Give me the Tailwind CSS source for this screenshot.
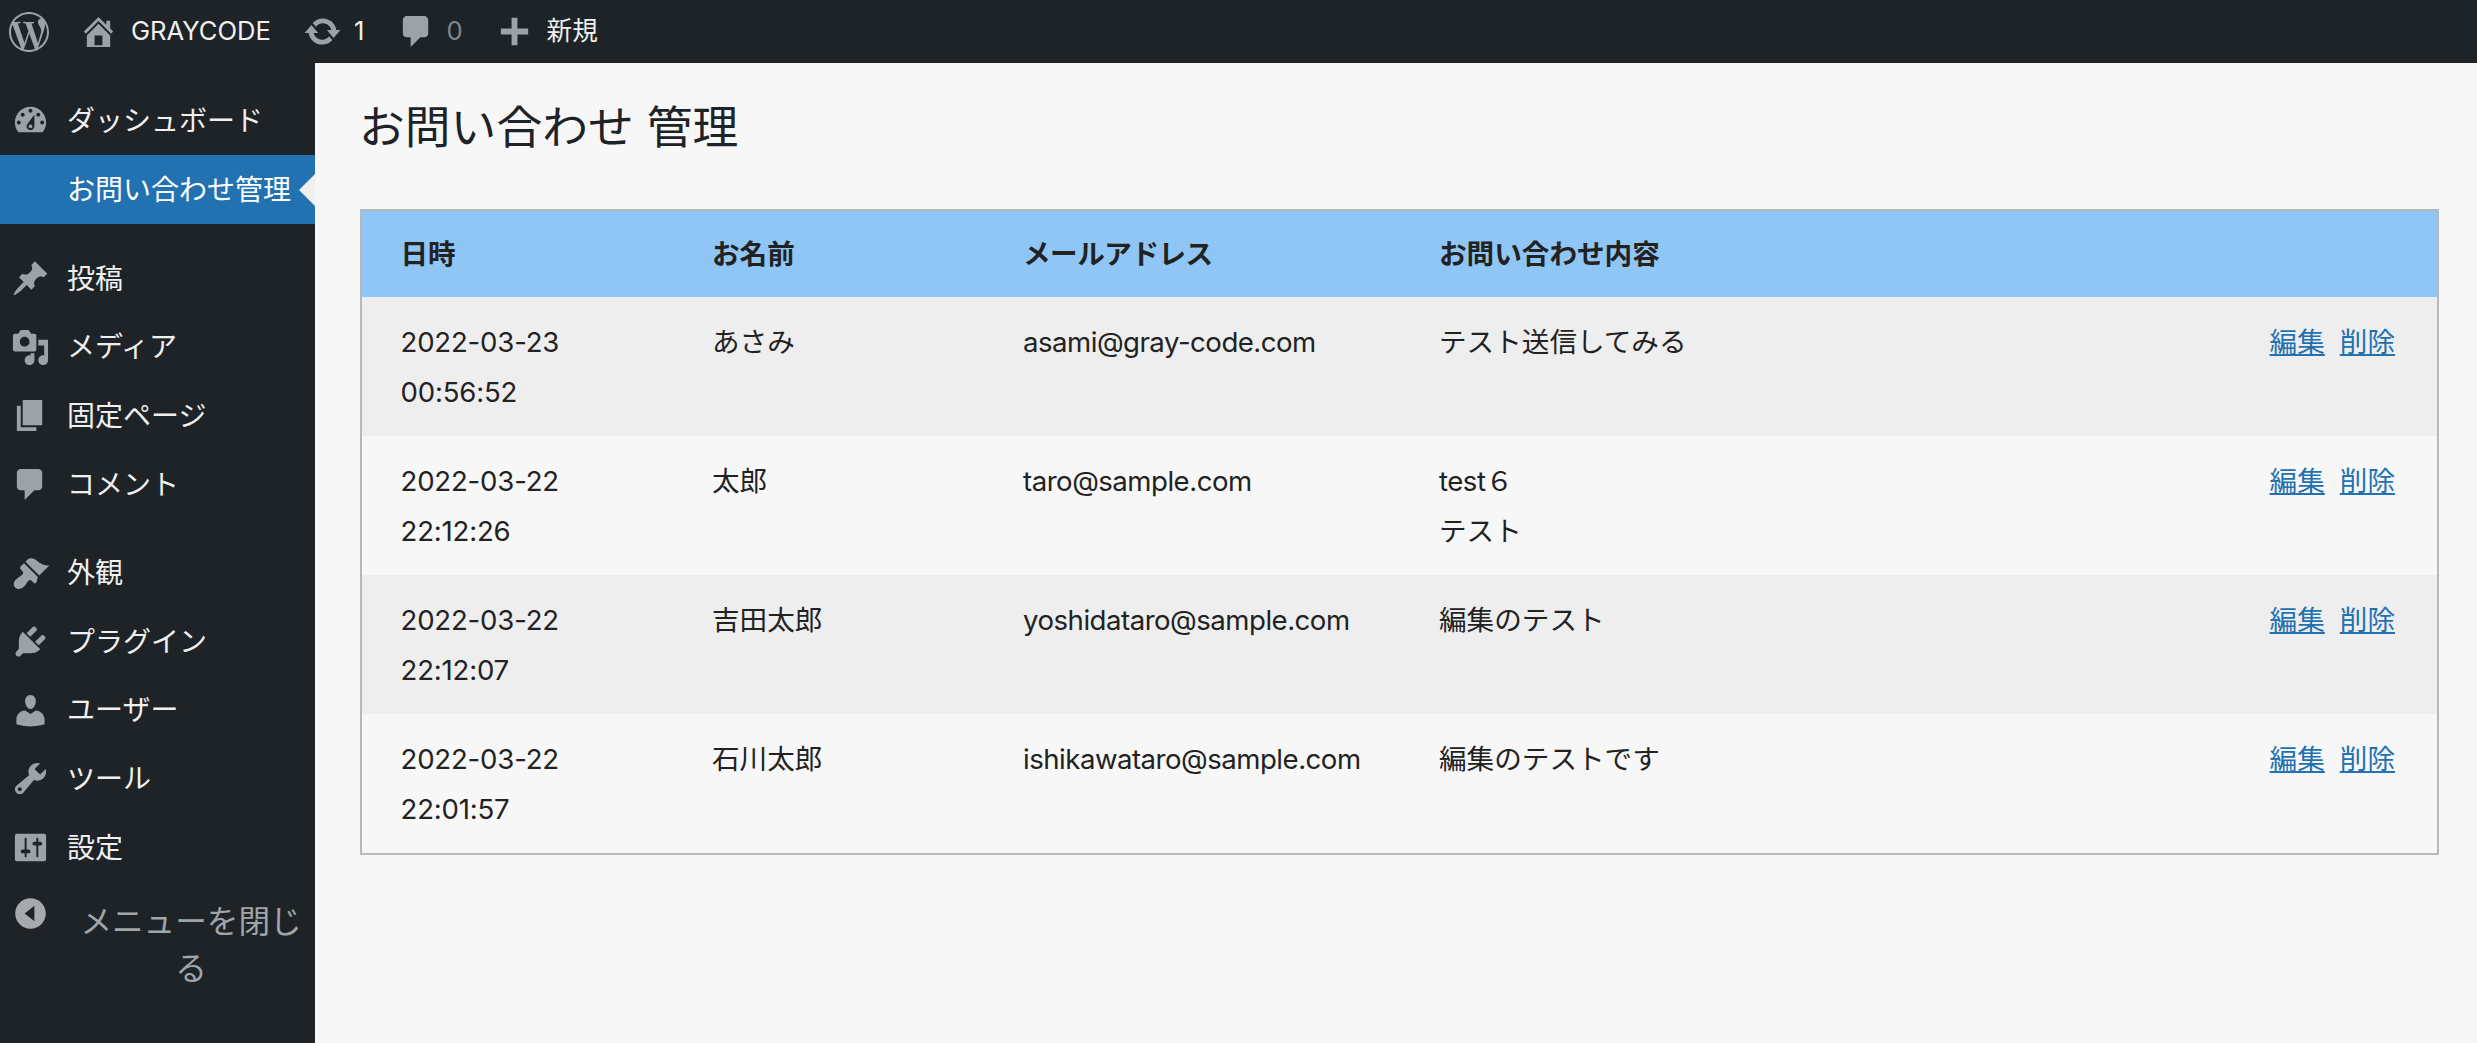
<!DOCTYPE html>
<html lang="ja">

<head>
  <meta charset="UTF-8">
  <title>お問い合わせ 管理</title>
  <script src="https://cdn.jsdelivr.net/npm/@tailwindcss/browser@4"></script>
</head>

<body class="bg-[#f7f7f7] text-[#1d2327] font-['Inter','Noto_Sans_CJK_JP',sans-serif] overflow-hidden">
  <div class="w-[2477px] h-[1043px] flex flex-col">

    <!-- admin bar -->
    <header class="h-[63px] shrink-0 bg-[#1d2327] text-[#f0f0f1] text-[25.6px] flex items-center">
      <svg class="w-[40px] h-[40px] ml-[9px] fill-[#9ca2a7]" viewBox="0 0 24 24"><path d="M21.469 6.825c.84 1.537 1.318 3.3 1.318 5.175 0 3.979-2.156 7.456-5.363 9.325l3.295-9.527c.615-1.54.82-2.771.82-3.864 0-.405-.026-.78-.07-1.11m-7.981.105c.647-.03 1.232-.105 1.232-.105.582-.075.514-.93-.067-.899 0 0-1.755.135-2.88.135-1.064 0-2.85-.15-2.85-.15-.585-.03-.661.855-.075.885 0 0 .54.061 1.125.09l1.68 4.605-2.37 7.08L5.354 6.9c.649-.03 1.234-.1 1.234-.1.585-.075.516-.93-.065-.896 0 0-1.746.138-2.874.138-.2 0-.438-.008-.69-.015C4.911 3.15 8.235 1.215 12 1.215c2.809 0 5.365 1.072 7.286 2.833-.046-.003-.091-.009-.141-.009-1.06 0-1.812.923-1.812 1.914 0 .89.513 1.643 1.06 2.531.411.72.89 1.643.89 2.977 0 .915-.354 1.994-.821 3.479l-1.075 3.585-3.9-11.61.001.014zM12 22.784c-1.059 0-2.081-.153-3.048-.437l3.237-9.406 3.315 9.087c.024.053.05.101.078.149-1.12.393-2.325.609-3.582.609M1.211 12c0-1.564.336-3.05.935-4.39L7.29 21.709C3.694 19.96 1.212 16.271 1.211 12M12 0C5.385 0 0 5.385 0 12s5.385 12 12 12 12-5.385 12-12S18.615 0 12 0"/></svg>
      <svg class="w-[39px] h-[39px] ml-[30px] fill-[#9ca2a7]" viewBox="0 0 20 20"><path d="M16 8.5l1.53 1.53-1.06 1.06L10 4.62l-6.47 6.47-1.06-1.06L10 2.5l4 4v-2h2v4zm-6-2.46l6 5.99V18H4v-5.97zM12 17v-5H8v5h4z"/></svg>
      <span class="ml-[13px]">GRAYCODE</span>
      <svg class="w-[39px] h-[39px] ml-[32px] fill-[#9ca2a7]" viewBox="0 0 20 20"><path d="M10.2 3.28c3.53 0 6.43 2.61 6.92 6h2.08l-3.5 4-3.5-4h2.32c-.45-1.97-2.21-3.45-4.32-3.45-1.45 0-2.73.71-3.54 1.78L4.95 5.66C6.23 4.2 8.11 3.28 10.2 3.28zm-.4 13.44c-3.52 0-6.43-2.61-6.92-6H.8l3.5-4c1.17 1.33 2.33 2.67 3.5 4H5.48c.45 1.97 2.21 3.45 4.32 3.45 1.45 0 2.73-.71 3.54-1.78l1.71 1.95c-1.28 1.46-3.15 2.38-5.25 2.38z"/></svg>
      <span class="ml-[12px]">1</span>
      <svg class="w-[39px] h-[39px] ml-[33px] fill-[#9ca2a7]" viewBox="0 0 20 20"><path d="M5 2h9c1.1 0 2 .9 2 2v7c0 1.1-.9 2-2 2h-2l-5 5v-5H5c-1.1 0-2-.9-2-2V4c0-1.1.9-2 2-2z"/></svg>
      <span class="ml-[10px] text-[#7f868c]">0</span>
      <svg class="w-[39px] h-[39px] ml-[32px] fill-[#9ca2a7]" viewBox="0 0 20 20"><path d="M8.5 3h3v5.5H17v3h-5.5V17h-3v-5.5H3v-3h5.5z"/></svg>
      <span class="ml-[13px]">新規</span>
    </header>

    <div class="flex-1 flex min-h-0">
      <!-- sidebar -->
      <nav class="w-[315px] shrink-0 bg-[#1d2327] text-[#f0f0f1] text-[28px] pt-[23px]">
        <a class="h-[69px] flex items-center pl-[11px]">
          <svg class="w-[39px] h-[39px] fill-[#9ca2a7]" viewBox="0 0 20 20"><path d="M3.76 16h12.48c1.1-1.37 1.76-3.11 1.76-5 0-4.42-3.58-8-8-8s-8 3.58-8 8c0 1.89.66 3.63 1.76 5zM10 4c.55 0 1 .45 1 1s-.45 1-1 1-1-.45-1-1 .45-1 1-1zM6 6c.55 0 1 .45 1 1s-.45 1-1 1-1-.45-1-1 .45-1 1-1zm8 0c.55 0 1 .45 1 1s-.45 1-1 1-1-.45-1-1 .45-1 1-1zm-5.37 5.55L12 7v6c0 1.1-.9 2-2 2s-2-.9-2-2c0-.57.24-1.08.63-1.45zM4 10c.55 0 1 .45 1 1s-.45 1-1 1-1-.45-1-1 .45-1 1-1zm12 0c.55 0 1 .45 1 1s-.45 1-1 1-1-.45-1-1 .45-1 1-1zm-5 3c0-.55-.45-1-1-1s-1 .45-1 1 .45 1 1 1 1-.45 1-1z"/></svg>
          <span class="ml-[17px]">ダッシュボード</span>
        </a>
        <a class="relative h-[69px] flex items-center pl-[67px] bg-[#2271b1] text-white">
          お問い合わせ管理
          <span class="absolute right-0 top-[19px] w-0 h-0 border-y-[16px] border-y-transparent border-r-[16px] border-r-[#f0f0f1]"></span>
        </a>

        <div class="mt-[20.5px]">
          <a class="h-[68.6px] flex items-center pl-[11px]">
            <svg class="w-[39px] h-[39px] fill-[#9ca2a7]" viewBox="0 0 20 20"><path d="M10.44 3.02l1.82-1.82 6.36 6.35-1.83 1.82c-1.05-.68-2.48-.57-3.41.36l-.75.75c-.92.93-1.04 2.35-.35 3.41l-1.83 1.82-2.41-2.41-2.8 2.79c-.42.42-3.38 2.71-3.8 2.29s1.86-3.39 2.28-3.81l2.79-2.79L4.1 9.36l1.83-1.82c1.05.69 2.48.57 3.4-.36l.75-.75c.93-.92 1.05-2.35.36-3.41z"/></svg>
            <span class="ml-[17px]">投稿</span>
          </a>
          <a class="h-[68.6px] flex items-center pl-[11px]">
            <svg class="w-[39px] h-[39px] fill-[#9ca2a7]" viewBox="0 0 20 20"><path d="M13 11V4c0-.55-.45-1-1-1h-1.67L9 1H5L3.67 3H2c-.55 0-1 .45-1 1v7c0 .55.45 1 1 1h10c.55 0 1-.45 1-1zM7 4.5c1.38 0 2.5 1.12 2.5 2.5S8.38 9.5 7 9.5 4.5 8.38 4.5 7 5.62 4.5 7 4.5zM14 6h5v10.5c0 1.38-1.12 2.5-2.5 2.5S14 17.88 14 16.5s1.12-2.5 2.5-2.5c.17 0 .34.02.5.05V9h-3V6zm-4 8.05V13h2v3.5c0 1.38-1.12 2.5-2.5 2.5S7 17.88 7 16.5 8.12 14 9.5 14c.17 0 .34.02.5.05z"/></svg>
            <span class="ml-[17px]">メディア</span>
          </a>
          <a class="h-[68.6px] flex items-center pl-[11px]">
            <svg class="w-[39px] h-[39px] fill-[#9ca2a7]" viewBox="0 0 20 20"><path d="M6 15V2h10v13H6zm-1 1h8v2H3V5h2v11z"/></svg>
            <span class="ml-[17px]">固定ページ</span>
          </a>
          <a class="h-[68.6px] flex items-center pl-[11px]">
            <svg class="w-[39px] h-[39px] fill-[#9ca2a7]" viewBox="0 0 20 20"><path d="M5 2h9c1.1 0 2 .9 2 2v7c0 1.1-.9 2-2 2h-2l-5 5v-5H5c-1.1 0-2-.9-2-2V4c0-1.1.9-2 2-2z"/></svg>
            <span class="ml-[17px]">コメント</span>
          </a>
        </div>

        <div class="mt-[20px]">
          <a class="h-[68.6px] flex items-center pl-[11px]">
            <svg class="w-[39px] h-[39px] fill-[#9ca2a7]" viewBox="0 0 20 20"><path d="M14.48 11.06L7.41 3.99l1.5-1.5c.5-.56 2.3-.47 3.51.32 1.21.8 1.43 1.28 2.91 2.1 1.18.64 2.45 1.26 4.45.85zm-.71.71L6.7 4.7 4.93 6.47c-.39.39-.39 1.02 0 1.41l1.06 1.06c.39.39.39 1.03 0 1.42-.6.6-1.43 1.11-2.21 1.69-.35.26-.7.53-1.01.84C1.43 13.71.96 15.65 2 17c1.04 1.35 3.2 1.1 4.55-.15.31-.31.58-.66.84-1.01.58-.78 1.09-1.61 1.69-2.21.39-.39 1.02-.39 1.41 0l1.06 1.06c.39.39 1.02.39 1.41 0z"/></svg>
            <span class="ml-[17px]">外観</span>
          </a>
          <a class="h-[68.6px] flex items-center pl-[11px]">
            <svg class="w-[39px] h-[39px] fill-[#9ca2a7]" viewBox="0 0 20 20"><path d="M13.11 4.36L9.87 7.6 8 5.73l3.24-3.24c.35-.34 1.05-.2 1.56.32.52.51.66 1.21.31 1.55zm-8 1.77l.91-1.12 9.01 9.01-1.19.84c-.71.71-2.63 1.16-3.82 1.16H6.14L4.9 17.26c-.59.59-1.54.59-2.12 0-.59-.58-.59-1.53 0-2.12l1.24-1.24v-3.88c0-1.13.4-3.19 1.09-3.89zm7.26 3.97l3.24-3.24c.34-.35 1.04-.21 1.55.31.52.51.66 1.21.31 1.55l-3.24 3.25z"/></svg>
            <span class="ml-[17px]">プラグイン</span>
          </a>
          <a class="h-[68.6px] flex items-center pl-[11px]">
            <svg class="w-[39px] h-[39px] fill-[#9ca2a7]" viewBox="0 0 20 20"><path d="M10 9.25c-2.27 0-2.73-3.44-2.73-3.44C7 4.02 7.82 2 9.97 2c2.16 0 2.98 2.02 2.71 3.81 0 0-.41 3.44-2.68 3.44zm0 2.57L12.72 10c2.39 0 4.52 2.33 4.52 4.53v2.49s-3.65 1.13-7.24 1.13c-3.65 0-7.24-1.13-7.24-1.13v-2.49c0-2.25 1.94-4.48 4.47-4.48z"/></svg>
            <span class="ml-[17px]">ユーザー</span>
          </a>
          <a class="h-[68.6px] flex items-center pl-[11px]">
            <svg class="w-[39px] h-[39px] fill-[#9ca2a7]" viewBox="0 0 20 20"><path d="M16.68 9.77c-1.34 1.34-3.3 1.67-4.95.99l-5.41 6.52c-.99.99-2.59.99-3.58 0s-.99-2.59 0-3.57l6.52-5.42c-.68-1.65-.35-3.61.99-4.95 1.28-1.28 3.12-1.62 4.72-1.06l-2.89 2.89 2.82 2.82 2.86-2.87c.53 1.58.18 3.39-1.08 4.65zM3.81 16.21c.4.39 1.04.39 1.43 0 .4-.4.4-1.04 0-1.43-.39-.4-1.03-.4-1.43 0-.39.39-.39 1.03 0 1.43z"/></svg>
            <span class="ml-[17px]">ツール</span>
          </a>
          <a class="h-[68.6px] flex items-center pl-[11px]">
            <svg class="w-[39px] h-[39px] fill-[#9ca2a7]" viewBox="0 0 20 20"><path fill-rule="evenodd" d="M3 3h14c.55 0 1 .45 1 1v12c0 .55-.45 1-1 1H3c-.55 0-1-.45-1-1V4c0-.55.45-1 1-1zM7 5.5V11H6c-.55 0-1 .45-1 1s.45 1 1 1h1v1.5c0 .28.22.5.5.5s.5-.22.5-.5V13h1c.55 0 1-.45 1-1s-.45-1-1-1H8V5.5c0-.28-.22-.5-.5-.5S7 5.22 7 5.5zM13 5.5V7h-1c-.55 0-1 .45-1 1s.45 1 1 1h1v5.5c0 .28.22.5.5.5s.5-.22.5-.5V9h1c.55 0 1-.45 1-1s-.45-1-1-1h-1V5.5c0-.28-.22-.5-.5-.5s-.5.22-.5.5z"/></svg>
            <span class="ml-[17px]">設定</span>
          </a>
        </div>

        <!-- collapse menu -->
        <div class="flex items-start pl-[11px] pt-[12px]">
          <svg class="w-[39px] h-[39px] shrink-0 fill-[#a7aaad]" viewBox="0 0 20 20"><path fill-rule="evenodd" d="M10 2.16c4.33 0 7.84 3.51 7.84 7.84s-3.51 7.84-7.84 7.84S2.16 14.33 2.16 10 5.67 2.16 10 2.16zM12 14V6l-5 4z"/></svg>
          <span class="w-[232px] ml-[25px] mt-[4px] text-center text-[31.6px] leading-[47px] text-[#a0a5aa]">メニューを閉じる</span>
        </div>
      </nav>

      <!-- content -->
      <main class="flex-1 min-w-0 pl-[45px] pr-[38px]">
        <h1 class="text-[45.8px] leading-[66px] mt-[32px] -ml-[1px] font-normal">お問い合わせ 管理</h1>

        <table class="mt-[48px] w-[2079px] table-fixed border-2 border-[#b8b8b8] text-[27.6px] leading-[50px] text-[#222] border-collapse">
          <colgroup>
            <col class="w-[311px]">
            <col class="w-[311px]">
            <col class="w-[416px]">
            <col>
            <col class="w-[300px]">
          </colgroup>
          <thead class="bg-[#8fc6f5] font-bold">
            <tr class="h-[87px]">
              <th class="pl-[38.5px] text-left font-bold">日時</th>
              <th class="pl-[40px] text-left font-bold">お名前</th>
              <th class="pl-[40px] text-left font-bold tracking-[-0.5px]">メールアドレス</th>
              <th class="pl-[40px] text-left font-bold">お問い合わせ内容</th>
              <th></th>
            </tr>
          </thead>
          <tbody>
            <tr class="bg-[#eeeeee] align-top">
              <td class="pl-[38.5px] py-[19.5px] tracking-[-0.2px]">2022-03-23<br>00:56:52</td>
              <td class="pl-[40px] py-[19.5px]">あさみ</td>
              <td class="pl-[40px] py-[19.5px] tracking-[-0.5px]">asami@gray-code.com</td>
              <td class="pl-[40px] py-[19.5px]">テスト送信してみる</td>
              <td class="pr-[42px] py-[19.5px] text-right text-[#2271b1]"><a class="underline">編集</a><a class="underline ml-[15px]">削除</a></td>
            </tr>
            <tr class="align-top">
              <td class="pl-[38.5px] py-[19.5px] tracking-[-0.2px]">2022-03-22<br>22:12:26</td>
              <td class="pl-[40px] py-[19.5px]">太郎</td>
              <td class="pl-[40px] py-[19.5px] tracking-[-0.5px]">taro@sample.com</td>
              <td class="pl-[40px] py-[19.5px]"><span class="tracking-[-0.5px]">test</span>６<br>テスト</td>
              <td class="pr-[42px] py-[19.5px] text-right text-[#2271b1]"><a class="underline">編集</a><a class="underline ml-[15px]">削除</a></td>
            </tr>
            <tr class="bg-[#eeeeee] align-top">
              <td class="pl-[38.5px] py-[19.5px] tracking-[-0.2px]">2022-03-22<br>22:12:07</td>
              <td class="pl-[40px] py-[19.5px]">吉田太郎</td>
              <td class="pl-[40px] py-[19.5px] tracking-[-0.5px]">yoshidataro@sample.com</td>
              <td class="pl-[40px] py-[19.5px]">編集のテスト</td>
              <td class="pr-[42px] py-[19.5px] text-right text-[#2271b1]"><a class="underline">編集</a><a class="underline ml-[15px]">削除</a></td>
            </tr>
            <tr class="align-top">
              <td class="pl-[38.5px] py-[19.5px] tracking-[-0.2px]">2022-03-22<br>22:01:57</td>
              <td class="pl-[40px] py-[19.5px]">石川太郎</td>
              <td class="pl-[40px] py-[19.5px] tracking-[-0.5px]">ishikawataro@sample.com</td>
              <td class="pl-[40px] py-[19.5px]">編集のテストです</td>
              <td class="pr-[42px] py-[19.5px] text-right text-[#2271b1]"><a class="underline">編集</a><a class="underline ml-[15px]">削除</a></td>
            </tr>
          </tbody>
        </table>
      </main>
    </div>
  </div>
</body>

</html>
